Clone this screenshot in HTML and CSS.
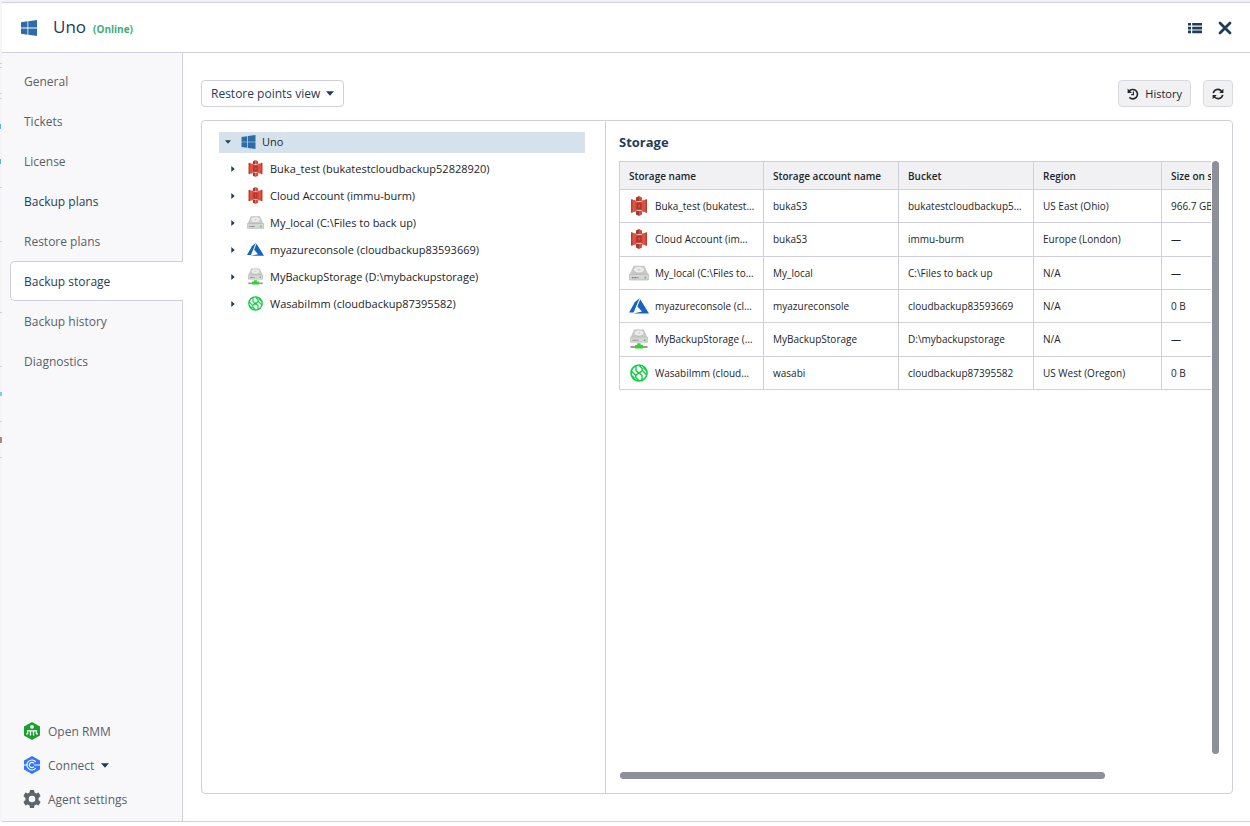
FILE: index.html
```html
<!DOCTYPE html>
<html lang="en">
<head>
<meta charset="UTF-8">
<meta name="viewport" content="width=device-width, initial-scale=1">
<title>Uno – Backup storage</title>
<link rel="stylesheet" href="styles.css">
</head>
<body>

<!-- icon sprite -->
<svg class="sprite" aria-hidden="true">
  <symbol id="i-windows" viewBox="0 0 16 16">
    <path fill="#2d6ca6" d="M0 2.2 6.5 1.3V7.6H0zM7.3 1.2 16 0V7.6H7.3zM0 8.4H6.5V14.7L0 13.8zM7.3 8.4H16V16L7.3 14.8z"/>
  </symbol>
  <symbol id="i-s3" viewBox="0 0 16 20">
    <path fill="#e05243" d="M0 3.500 5 4.500V15.500L0 16.500zM16 3.500 11 4.500V15.500L16 16.500z"/>
    <path fill="#b5402f" d="M0 3.500 1.500 3.200V16.800L0 16.500zM14.500 3.200 16 3.500V16.500L14.500 16.800z"/>
    <path fill="#d0483a" d="M4.500 5.800H11.500V14.200H4.500z"/>
    <path fill="#a83428" d="M5.500 7.200H10.500V12.800H5.500z"/>
    <path fill="#d85044" d="M7.300 8.600H9.300V11.400H7.300z"/>
    <path fill="#a83a2c" d="M5 1.500 8 0V5L5 5.600zM5 18.500 8 20V15L5 14.400z"/>
    <path fill="#d64d3f" d="M8 0 11 1.500V5.600L8 5zM8 20 11 18.500V14.400L8 15z"/>
  </symbol>
  <symbol id="i-disk" viewBox="0 0 18 14">
    <path fill="#c9c9c9" d="M4 .5H13.8L17.5 8.5H.5z"/>
    <ellipse cx="9" cy="4" rx="5" ry="3" fill="#ececec" stroke="#b4b4b4" stroke-width=".5"/>
    <ellipse cx="9" cy="4" rx="1.4" ry=".8" fill="#d0d0d0"/>
    <path fill="#d6d6d6" stroke="#a8a8a8" stroke-width=".5" d="M.5 8.2H17.5V13.3H.5z"/>
    <path stroke="#777" stroke-width="1" stroke-dasharray="1 .4" d="M2.500 11.200H8.500"/>
    <path fill="#34d334" d="M14 10.400h1.500v1.500H14z"/>
  </symbol>
  <symbol id="i-netdisk" viewBox="0 0 18 20">
    <use href="#i-disk" width="18" height="14"/>
    <path fill="#999" d="M.5 17H17.5V19H.5z"/>
    <path fill="#2fd62f" d="M7.3 14.3H10.7V16H13V19.5H5V16H7.3z"/>
  </symbol>
  <symbol id="i-azure" viewBox="0 0 20 16">
    <path fill="#1565c0" d="M10.6 0 5.8 4.2 0 14.4H4.6z"/>
    <path fill="#1565c0" d="M11.2 1.2 8.4 8.4 13 13.6 4.4 15.4H20z"/>
  </symbol>
  <symbol id="i-wasabi" viewBox="0 0 18 18">
    <circle cx="9" cy="9" r="8" fill="none" stroke="#0bcf43" stroke-width="1.600"/>
    <path fill="none" stroke="#0bcf43" stroke-width="1.400" d="M6 1.500V6.500L9 9.500 12.200 6.500V4.500L9.200 1.500M12 16.500V11.500L9 8.500 5.800 11.500V13.500L8.800 16.500M1.200 7 5.800 11.500M1.500 11.500 4.800 14.500M16.800 11 12.200 6.500M16.500 6.500 13.200 3.500"/>
  </symbol>
  <symbol id="i-list" viewBox="0 0 14 12">
    <path fill="#1f3d58" d="M0 1h3v2.6H0zM4.2 1H14v2.6H4.2zM0 4.8h3v2.6H0zM4.2 4.8H14v2.6H4.2zM0 8.6h3v2.6H0zM4.2 8.6H14v2.6H4.2z"/>
  </symbol>
  <symbol id="i-close" viewBox="0 0 14 14">
    <path stroke="#1f3d58" stroke-width="2.8" stroke-linecap="round" d="M2 2 12 12M12 2 2 12"/>
  </symbol>
  <symbol id="i-history" viewBox="0 0 12 12">
    <path fill="none" stroke="#212529" stroke-width="1.6" d="M2.1 3.2A4.7 4.7 0 1 1 2.4 9.4"/>
    <path fill="#212529" d="M.6.6V5H5z"/>
    <path fill="none" stroke="#212529" stroke-width="1.2" d="M6.4 3.4V6.6H4.2"/>
  </symbol>
  <symbol id="i-refresh" viewBox="0 0 12 12">
    <path fill="none" stroke="#212529" stroke-width="1.6" d="M1.3 5.2A4.7 4.7 0 0 1 9.6 3.2M10.7 6.8A4.7 4.7 0 0 1 2.4 8.8"/>
    <path fill="#212529" d="M11.4.8V5H7.2zM.6 11.2V7h4.2z"/>
  </symbol>
  <symbol id="i-rmm" viewBox="0 0 18 18">
    <path fill="#18a02c" d="M9 0 17 4.4V13.6L9 18 1 13.6V4.4z"/>
    <circle cx="9" cy="4.800" r="1.900" fill="#fff"/>
    <path fill="none" stroke="#fff" stroke-width="1.300" d="M4.600 12V8.800H13.400V12M7.500 8.800V13.500M10.500 8.800V13.500M3.200 11.800H5.200M12.800 11.800H14.800"/>
  </symbol>
  <symbol id="i-connect" viewBox="0 0 18 18">
    <path fill="#2f75ff" d="M9 0 17 4.4V13.6L9 18 1 13.6V4.4z"/>
    <path fill="none" stroke="#fff" stroke-width="1.200" d="M12.800 5.800A5 5 0 1 0 12.800 12.200M11 7.400A2.600 2.600 0 1 0 11 10.600M11 9H17M1 9H4"/>
  </symbol>
  <symbol id="i-gear" viewBox="0 0 18 18">
    <path fill="#5f646b" fill-rule="evenodd" d="M7 0h4l.5 2.6 1.6.9L15.6 2.600l2 3.500-2 1.800v2.200l2 1.800-2 3.500-2.500-.9-1.600.9L11 18H7l-.5-2.600-1.600-.9-2.500.9-2-3.500 2-1.800V7.900l-2-1.800 2-3.500 2.500.9 1.600-.9zM9 5.700a3.300 3.300 0 1 0 0 6.600 3.300 3.300 0 0 0 0-6.600z"/>
  </symbol>
  <symbol id="i-down" viewBox="0 0 8 5">
    <path fill="#1f3d58" d="M0 .3H8L4 4.700z"/>
  </symbol>
  <symbol id="i-right" viewBox="0 0 4 6">
    <path fill="#1f3d58" d="M.3 0V6L3.700 3z"/>
  </symbol>
</svg>

<div class="app">
  <div class="behind" aria-hidden="true"></div>

  <main class="dialog">
    <header class="dialog-header">
      <svg class="os"><use href="#i-windows"/></svg>
      <h1>Uno</h1>
      <span class="status">(Online)</span>
      <div class="header-actions">
        <button class="plain" aria-label="List"><svg class="list"><use href="#i-list"/></svg></button>
        <button class="plain" aria-label="Close"><svg class="close"><use href="#i-close"/></svg></button>
      </div>
    </header>

    <div class="dialog-body">
      <nav class="sidebar">
        <ul class="menu">
          <li><a href="#">General</a></li>
          <li><a href="#">Tickets</a></li>
          <li><a href="#">License</a></li>
          <li><a href="#" class="dark">Backup plans</a></li>
          <li><a href="#">Restore plans</a></li>
          <li><a href="#" class="dark active" aria-current="page">Backup storage</a></li>
          <li><a href="#">Backup history</a></li>
          <li><a href="#">Diagnostics</a></li>
        </ul>
        <div class="tools">
          <a href="#"><svg><use href="#i-rmm"/></svg>Open RMM</a>
          <button class="plain"><svg><use href="#i-connect"/></svg>Connect <svg class="caret"><use href="#i-down"/></svg></button>
          <a href="#"><svg><use href="#i-gear"/></svg>Agent settings</a>
        </div>
      </nav>

      <section class="content">
        <div class="toolbar">
          <div class="select">
            <select aria-label="View"><option>Restore points view</option></select>
            <svg class="caret"><use href="#i-down"/></svg>
          </div>
          <button class="btn"><svg><use href="#i-history"/></svg>History</button>
          <button class="btn" aria-label="Refresh"><svg><use href="#i-refresh"/></svg></button>
        </div>

        <div class="panel">
          <ul class="tree">
            <li class="root"><svg class="open"><use href="#i-down"/></svg><svg class="ico win"><use href="#i-windows"/></svg>Uno</li>
            <li><svg class="arrow"><use href="#i-right"/></svg><svg class="ico"><use href="#i-s3"/></svg>Buka_test (bukatestcloudbackup52828920)</li>
            <li><svg class="arrow"><use href="#i-right"/></svg><svg class="ico"><use href="#i-s3"/></svg>Cloud Account (immu-burm)</li>
            <li><svg class="arrow"><use href="#i-right"/></svg><svg class="ico"><use href="#i-disk"/></svg>My_local (C:\Files to back up)</li>
            <li><svg class="arrow"><use href="#i-right"/></svg><svg class="ico"><use href="#i-azure"/></svg>myazureconsole (cloudbackup83593669)</li>
            <li><svg class="arrow"><use href="#i-right"/></svg><svg class="ico"><use href="#i-netdisk"/></svg>MyBackupStorage (D:\mybackupstorage)</li>
            <li><svg class="arrow"><use href="#i-right"/></svg><svg class="ico small"><use href="#i-wasabi"/></svg>WasabiImm (cloudbackup87395582)</li>
          </ul>

          <div class="storage">
            <h2>Storage</h2>
            <div class="scroller">
              <div class="viewport">
                <table>
                  <colgroup><col class="c-name"><col class="c-acc"><col class="c-acc"><col class="c-reg"><col class="c-acc"></colgroup>
                  <thead>
                    <tr><th>Storage name</th><th>Storage account name</th><th>Bucket</th><th>Region</th><th>Size on storage</th></tr>
                  </thead>
                  <tbody>
                    <tr><td><div class="name"><svg><use href="#i-s3"/></svg><span>Buka_test (bukatestcloudbackup52828920)</span></div></td><td>bukaS3</td><td>bukatestcloudbackup52828920</td><td>US East (Ohio)</td><td>966.7 GB</td></tr>
                    <tr><td><div class="name"><svg><use href="#i-s3"/></svg><span>Cloud Account (immu-burm)</span></div></td><td>bukaS3</td><td>immu-burm</td><td>Europe (London)</td><td>—</td></tr>
                    <tr><td><div class="name"><svg><use href="#i-disk"/></svg><span>My_local (C:\Files to back up)</span></div></td><td>My_local</td><td>C:\Files to back up</td><td>N/A</td><td>—</td></tr>
                    <tr><td><div class="name"><svg><use href="#i-azure"/></svg><span>myazureconsole (cloudbackup83593669)</span></div></td><td>myazureconsole</td><td>cloudbackup83593669</td><td>N/A</td><td>0 B</td></tr>
                    <tr><td><div class="name"><svg><use href="#i-netdisk"/></svg><span>MyBackupStorage (D:\mybackupstorage)</span></div></td><td>MyBackupStorage</td><td>D:\mybackupstorage</td><td>N/A</td><td>—</td></tr>
                    <tr><td><div class="name"><svg class="round"><use href="#i-wasabi"/></svg><span>WasabiImm (cloudbackup87395582)</span></div></td><td>wasabi</td><td>cloudbackup87395582</td><td>US West (Oregon)</td><td>0 B</td></tr>
                  </tbody>
                </table>
              </div>
              <div class="bar-y"></div>
              <div class="bar-x"></div>
            </div>
          </div>
        </div>
      </section>
    </div>
  </main>
</div>

</body>
</html>
```
FILE: styles.css
```css
/* Reset */
*,*::before,*::after{box-sizing:border-box;margin:0;padding:0}
body{font-family:"Open Sans","Noto Sans",sans-serif;font-size:12px;color:#212529;background:#fff}
ul{list-style:none}
a{color:inherit;text-decoration:none}
button,select{font:inherit;color:inherit}
svg{flex:none;display:block}
.sprite{display:none}
.plain{background:none;border:0;cursor:pointer}

/* Dialog over the page */
.app{display:flex;height:100vh;padding-bottom:4px;background:linear-gradient(#f1f1f4,#f1f1f4) 0 0/100% 2px no-repeat}
.behind{
  width:2px;
  background:
    linear-gradient(#d0d0d8,#d0d0d8) 0 63px/2px 1px no-repeat,
    linear-gradient(#d0d0d8,#d0d0d8) 0 67px/2px 1px no-repeat,
    linear-gradient(#d0d0d8,#d0d0d8) 0 93px/2px 1px no-repeat,
    linear-gradient(#d0d0d8,#d0d0d8) 0 98px/2px 1px no-repeat,
    linear-gradient(#5db5e0,#5db5e0) 0 124px/1px 5px no-repeat,
    linear-gradient(#5db5e0,#5db5e0) 0 159px/1px 5px no-repeat,
    linear-gradient(#d0d0d8,#d0d0d8) 0 187px/2px 1px no-repeat,
    linear-gradient(#d0d0d8,#d0d0d8) 0 241px/2px 1px no-repeat,
    linear-gradient(#d0d0d8,#d0d0d8) 0 312px/2px 1px no-repeat,
    linear-gradient(#d0d0d8,#d0d0d8) 0 366px/2px 1px no-repeat,
    linear-gradient(#8cc8e6,#8cc8e6) 0 392px/2px 4px no-repeat,
    linear-gradient(#d0d0d8,#d0d0d8) 0 421px/2px 1px no-repeat,
    linear-gradient(#a58a86,#a58a86) 0 437px/2px 6px no-repeat,
    linear-gradient(#d0d0d8,#d0d0d8) 0 457px/2px 1px no-repeat,
    #f4f4f6
}
.dialog{
  flex:1;min-width:0;display:flex;flex-direction:column;background:#fff;
  border-top:1px solid #d0d0dc;border-bottom:1px solid #d0d0dc;margin-top:2px
}

/* Header */
.dialog-header{height:50px;display:flex;align-items:center;padding:0 18px 0 19px;border-bottom:1px solid #d0d0dc}
.os{width:16px;height:16px}
h1{font-size:17px;font-weight:500;color:#1f3d58;margin-left:16px;padding-bottom:2px}
.status{font-size:10px;font-weight:700;color:#3dae78;margin:3px 0 0 7px}
.header-actions{margin-left:auto;display:flex;align-items:center;gap:16px}
.list{width:14px;height:12px}
.close{width:14px;height:14px}

/* Sidebar */
.dialog-body{flex:1;min-height:0;display:flex}
.sidebar{width:181px;background:#f8f8fb;border-right:1px solid #d0d0dc;display:flex;flex-direction:column;justify-content:space-between;padding-top:8px;color:#5a5f66;font-weight:500}
.menu a{display:flex;align-items:center;height:40px;padding-left:22px}
.menu .dark{color:#1f3d58}
.menu .active{background:#fff;border:1px solid #d0d0dc;border-right:0;border-radius:5px 0 0 5px;margin:0 -1px 0 8px;padding-left:13px}
.tools{padding:0 0 12px 21px;display:flex;flex-direction:column;align-items:flex-start;gap:14px}
.tools a,.tools button{display:flex;align-items:center;gap:7px;height:20px}
.tools svg{width:18px;height:18px}
.tools .caret{width:8px;height:5px}

/* Content */
.content{flex:1;min-width:0;display:flex;flex-direction:column;padding:27px 17px 27px 18px}
.toolbar{display:flex;gap:12px;margin-bottom:13px}
.select{position:relative;margin-right:auto;color:#1f3d58}
.select select{appearance:none;height:27px;width:143px;padding:0 20px 0 9px;background:#fff;border:1px solid #d0d0dc;border-radius:4px}
.select .caret{position:absolute;right:10px;top:11px;width:8px;height:5px;pointer-events:none}
.btn{height:27px;min-width:30px;display:flex;align-items:center;justify-content:center;gap:6px;padding:0 8px;background:#f1f1f4;border:1px solid #d9d9e2;border-radius:4px;font-size:11px}
.btn svg{width:12px;height:12px}

.panel{flex:1;min-height:0;display:flex;border:1px solid #d0d0dc;border-radius:4px}

/* Tree */
.tree{width:404px;border-right:1px solid #d0d0dc;padding:11px 20px 0 17px;display:flex;flex-direction:column;gap:6px;font-size:11px}
.tree li{display:flex;align-items:center;height:21px;padding:0 0 2px 12px}
.tree .root{background:#d5e2ec;padding-left:6px}
.arrow{width:4px;height:6px;margin-right:12px}
.open{width:6px;height:4px;margin-right:10px}
.ico{width:17px;height:17px;margin-right:6px}
.ico.win{width:15px;height:14px}
.ico.small{height:15px}

/* Storage */
.storage{flex:1;min-width:0;display:flex;flex-direction:column;padding:11px 13px 14px}
h2{font-size:13px;font-weight:700;line-height:21px;color:#1f3d58;margin-bottom:8px}
.scroller{flex:1;min-height:0;display:grid;grid-template:minmax(0,1fr) 7px / minmax(0,1fr) 7px;column-gap:1px;row-gap:18px}
.viewport{overflow:hidden}
.bar-y,.bar-x{background:#8d8f9b;border-radius:4px}
.bar-x{width:82%;margin-left:1px}
table{table-layout:fixed;width:677px;height:229px;border-collapse:collapse;font-size:10px}
.c-name{width:144px}
.c-acc{width:135px}
.c-reg{width:128px}
th,td{border:1px solid #d0d0dc;padding:0 9px;text-align:left;white-space:nowrap;overflow:hidden;text-overflow:ellipsis}
th{height:28px;background:#f1f1f4;font-weight:600}
td:first-child{padding-right:8px}
.name{display:flex;align-items:center;gap:6px}
.name svg{width:20px;height:20px}
.name .round{padding:1px}
.name span{overflow:hidden;text-overflow:ellipsis}
```
